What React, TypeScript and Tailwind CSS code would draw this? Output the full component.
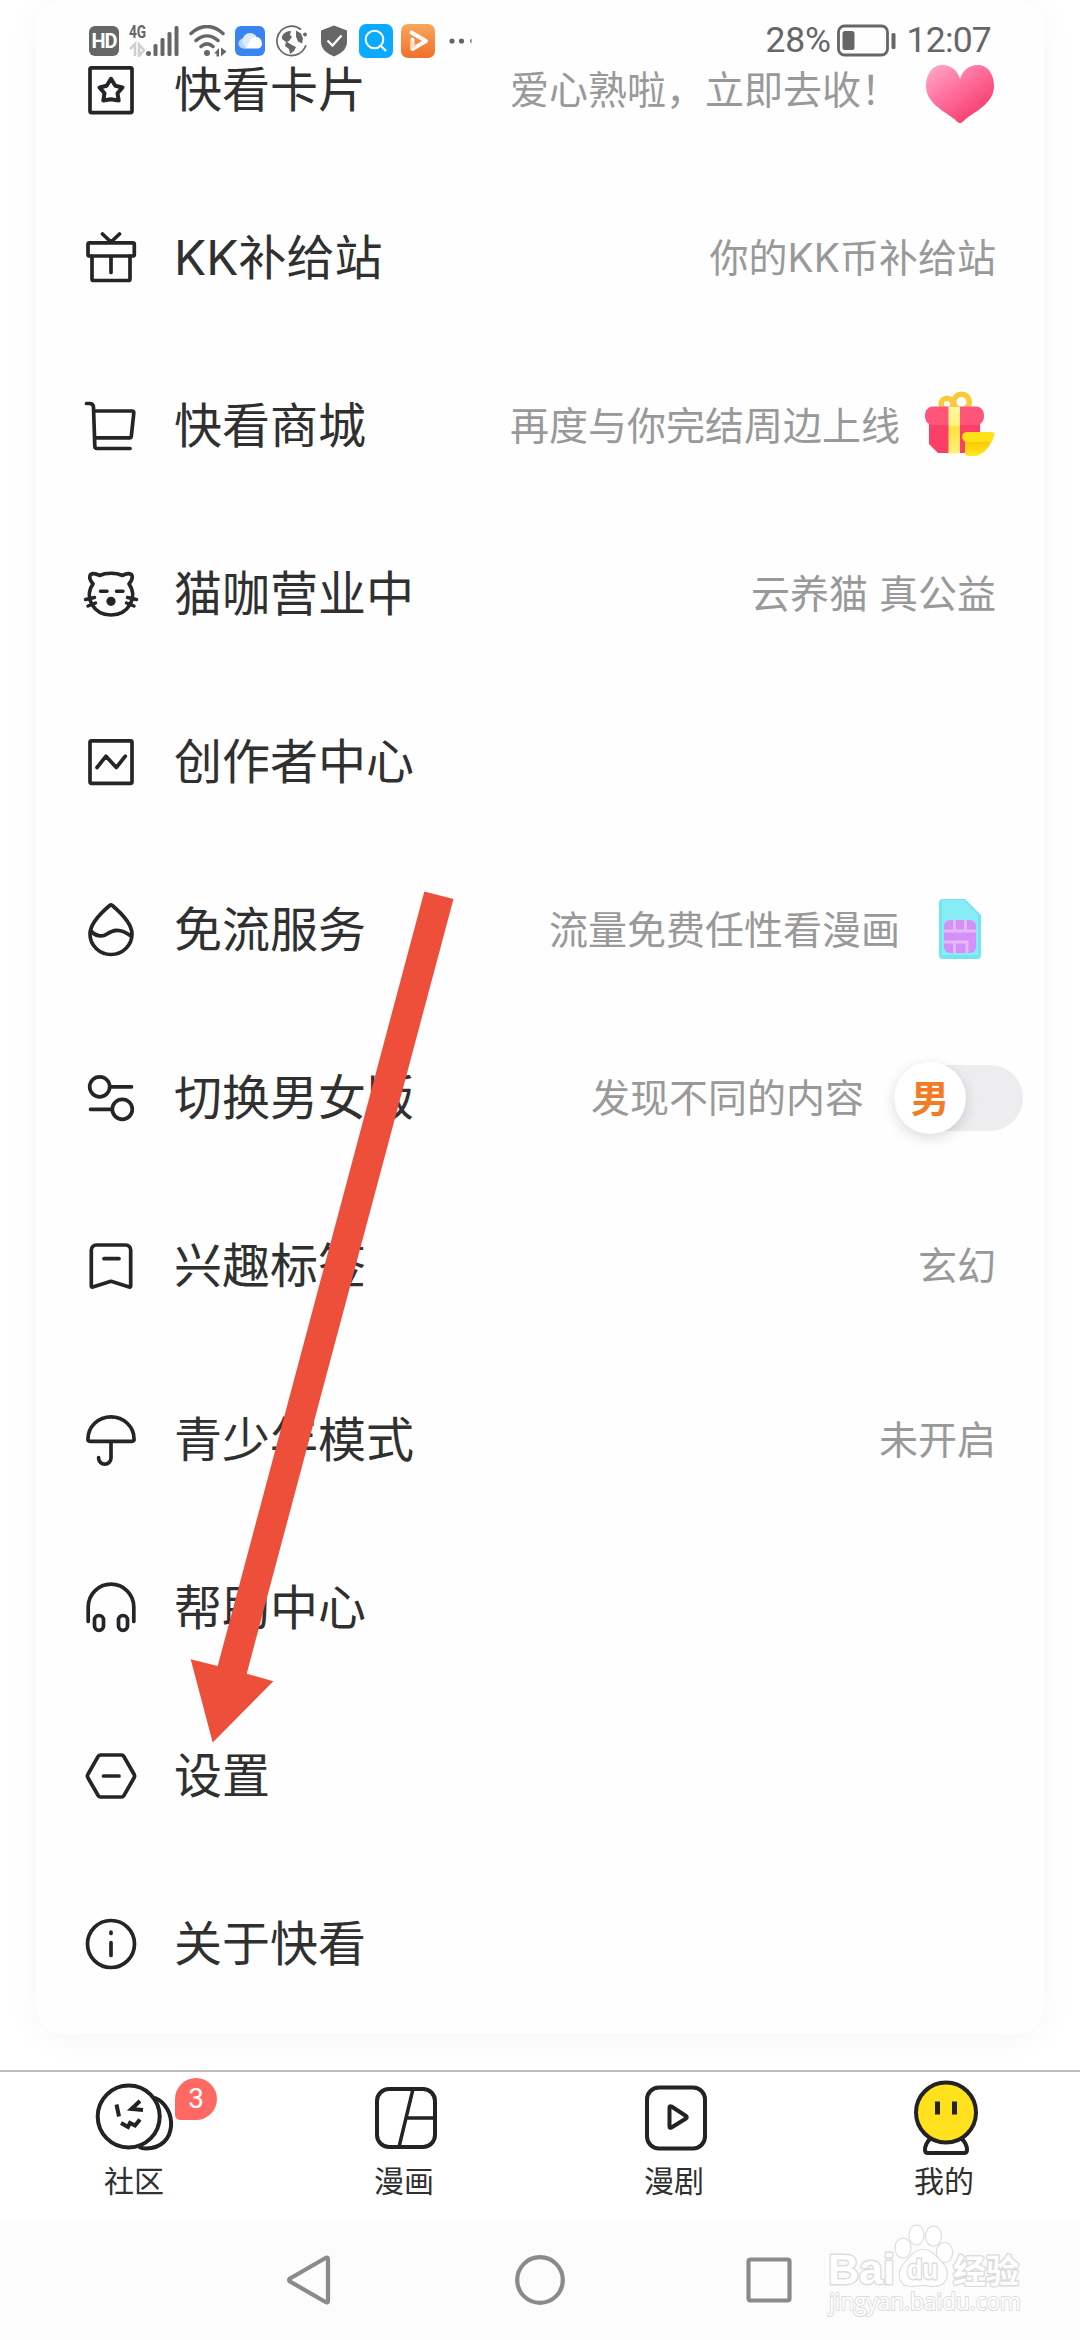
import { memo, type ReactNode } from 'react';

interface MenuItem {
    label: string;
    icon: ReactNode;
    hint?: string;
    extra?: ReactNode;
}

/**
 * Line icon frame shared by every menu row
 */
const LineIcon = ({ children }: { children: ReactNode }) => (
    <svg
        viewBox="0 0 60 60"
        className="size-[60px] shrink-0"
        fill="none"
        stroke="#272429"
        strokeWidth="3.7"
        strokeLinecap="round"
        strokeLinejoin="round"
    >
        {children}
    </svg>
);

const HeartIcon = () => (
    <svg viewBox="0 0 72 72" className="size-[72px]">
        <defs>
            <linearGradient id="heart" x1="0.1" y1="0.1" x2="0.75" y2="0.85">
                <stop offset="0" stopColor="#ff9dc0" />
                <stop offset="0.5" stopColor="#ff6c9a" />
                <stop offset="1" stopColor="#f5416f" />
            </linearGradient>
        </defs>
        <path
            d="M36 69c-2 0-3.500-2-5-3.500C20 57 2 49 2 32 2 19 9 11 18 11c9 0 15 5 18 14 3-9 9-14 18-14 9 0 16 8 16 21 0 17-18 25-29 33.500C39.500 67 38 69 36 69z"
            fill="url(#heart)"
        />
    </svg>
);

const GiftBoxIcon = () => (
    <svg viewBox="0 0 72 72" className="size-[72px]">
        <defs>
            <linearGradient id="ribbon" x1="0" y1="0" x2="0" y2="1">
                <stop offset="0" stopColor="#fff79a" />
                <stop offset="0.38" stopColor="#fff383" />
                <stop offset="0.45" stopColor="#ffdf3e" />
                <stop offset="1" stopColor="#fff27c" />
            </linearGradient>
            <linearGradient id="bowl" x1="0" y1="0" x2="0" y2="1">
                <stop offset="0" stopColor="#fbc400" />
                <stop offset="1" stopColor="#ffea20" />
            </linearGradient>
        </defs>
        <g fill="none" stroke="#f8c93a" strokeWidth="5.500">
            <circle cx="23" cy="14" r="5.800" />
            <circle cx="37.500" cy="12" r="7.800" />
        </g>
        <path d="M5 30h51v33H14l-9-9z" fill="#fb3f66" />
        <path d="M9 16.500h43c5 0 8 4 8 9 0 6-3 9.500-8 9.500H9c-5 0-8-3.500-8-9.500 0-5 3-9 8-9z" fill="#ff5579" />
        <path d="M24.500 16.500h11.500v47H24.500z" fill="url(#ribbon)" />
        <path d="M41 50h27c-3 8-10 16-18 16h-5c-3 0-4-1-4-4z" fill="url(#bowl)" />
        <path d="M43 42h24c3 0 4 1 3 4l-2 6H43c-6 0-7-10 0-10z" fill="#ffe118" />
    </svg>
);

const SimIcon = () => (
    <svg viewBox="0 0 72 72" className="size-[72px]">
        <path d="M19 5h22l16 16v40a4 4 0 0 1-4 4H19a4 4 0 0 1-4-4V9a4 4 0 0 1 4-4z" fill="#74e4f0" />
        <path d="M18 6h22l14 15v40H18z" fill="#86ecf6" />
        <rect x="20" y="26" width="32" height="33" rx="6" fill="#d48ff8" />
        <path d="M20 37h32M30.500 26v11M41.500 26v11M20 48h23v11M30.500 48v11" fill="none" stroke="#e4b9fb" strokeWidth="3" />
    </svg>
);

const VersionSwitch = () => (
    <div className="-mr-[27px] ml-1.5 flex h-[66px] w-[129px] items-center rounded-full bg-[#ededef]">
        <div className="flex size-[72px] shrink-0 items-center justify-center rounded-full bg-white text-[38px] leading-none font-bold text-[#f37b26] shadow-[0_4px_14px_rgba(0,0,0,0.14)]">
            男
        </div>
    </div>
);

const mainItems: MenuItem[] = [
    {
        label: '快看卡片',
        hint: '爱心熟啦，立即去收！',
        extra: <HeartIcon />,
        icon: (
            <>
                <rect x="9" y="7.800" width="42" height="44.800" rx="1.500" />
                <path d="M30 18.800l4.300 7 7.200 1.700-5 5.700 1.200 7.300-7.700-1.300-7.700 1.300 1.200-7.300-5-5.700 7.200-1.700z" strokeWidth="4" />
            </>
        ),
    },
    {
        label: 'KK补给站',
        hint: '你的KK币补给站',
        icon: (
            <>
                <rect x="7" y="14.800" width="46.300" height="13.200" rx="1.500" />
                <path d="M11 28v23a1.500 1.500 0 0 0 1.500 1.500h35A1.500 1.500 0 0 0 49 51V28M30 29v15.500M21.500 6l8.500 8 8.500-8" />
            </>
        ),
    },
    {
        label: '快看商城',
        hint: '再度与你完结周边上线',
        extra: <GiftBoxIcon />,
        icon: (
            <path d="M5.500 7.500h3c2.500 0 4 1.500 4 4L13.800 50c0 1.500 1 2.500 2.500 2.500H49M13.500 15h37.500q2 0 1.800 2L50.300 40.500q-.2 1.300-1.800 1.300H14" />
        ),
    },
    {
        label: '猫咖营业中',
        hint: '云养猫 真公益',
        icon: (
            <>
                <path d="M12 20C8 15 8.500 12 9.500 10.500c2.500-1.500 6.500-.5 9 1C25 8.500 35 8.500 41.500 11.500c2.500-1.500 6.500-2.500 9-1 1 1.500 1.500 4.500-2.500 9.500 9.500 13-.5 31-18 31S2.500 33 12 20" />
                <path d="M19.500 27.300h6.500M35.500 27.300h6.500M4.500 35.500l9-2M7 42l7.500-3M55.500 35.500l-9-2M53 42l-7.500-3" strokeWidth="3.500" />
                <circle cx="30" cy="37.300" r="4.600" fill="#272429" stroke="none" />
            </>
        ),
    },
    {
        label: '创作者中心',
        icon: (
            <>
                <rect x="9" y="8.800" width="42" height="42.500" rx="1.500" />
                <path d="M16 35.500l9-11.300 10.300 11.300 9-11.300" />
            </>
        ),
    },
    {
        label: '免流服务',
        hint: '流量免费任性看漫画',
        extra: <SimIcon />,
        icon: (
            <>
                <path d="M28.700 5.500q1.300-1 2.600 0C39 12 51 24 51 34a21 20.500 0 0 1-42 0c0-10 12-22 19.700-28.500z" />
                <path d="M10 31c4 5 11 6.500 16 3s12-7 24 2" />
            </>
        ),
    },
    {
        label: '切换男女版',
        hint: '发现不同的内容',
        extra: <VersionSwitch />,
        icon: (
            <>
                <circle cx="18.700" cy="18.800" r="10" />
                <circle cx="41.300" cy="41.300" r="10" />
                <path d="M30 18.800h20.500M9.500 41.300H30" />
            </>
        ),
    },
    {
        label: '兴趣标签',
        hint: '玄幻',
        icon: (
            <>
                <path d="M10.300 50V14a5 5 0 0 1 5-5h29.400a5 5 0 0 1 5 5v36q0 1.500-1.500 1L30 45.300 11.800 51q-1.500.5-1.500-1z" />
                <path d="M23 22.700h15" />
            </>
        ),
    },
];

const systemItems: MenuItem[] = [
    {
        label: '青少年模式',
        hint: '未开启',
        icon: (
            <path d="M9 31.300h42q2.500 0 2-2.500a23 22 0 0 0-46 0q-.5 2.500 2 2.500zM30 31.500V48a6.200 6.200 0 0 1-12.400 0v-.5" />
        ),
    },
    {
        label: '帮助中心',
        icon: (
            <>
                <path d="M7.200 43.500V29a22.800 22.800 0 0 1 45.600 0v14.500" />
                <rect x="13.500" y="37.500" width="9" height="14.800" rx="4.500" />
                <rect x="37.500" y="37.500" width="9" height="14.800" rx="4.500" />
            </>
        ),
    },
    {
        label: '设置',
        icon: (
            <>
                <path d="M19.500 9h21q1.500 0 2.200 1.200l10.500 18.300q.8 1.500 0 3L42.700 49.800Q42 51 40.500 51h-21q-1.500 0-2.200-1.200L6.800 31.500q-.8-1.500 0-3l10.500-18.300Q18 9 19.500 9z" />
                <path d="M22.500 30h15.500" />
            </>
        ),
    },
    {
        label: '关于快看',
        icon: (
            <>
                <circle cx="30" cy="30" r="23.500" />
                <path d="M30 18v1.500M30 28.500V41.500" />
            </>
        ),
    },
];

const MenuRow = memo(function MenuRow({ label, icon, hint, extra }: MenuItem) {
    return (
        <li className="flex h-[168px] items-center pr-12 pl-[45px]">
            <LineIcon>{icon}</LineIcon>
            <span className="ml-[33px] text-[48px] leading-[60px] text-[#303030]">{label}</span>
            <div className="ml-auto flex items-center gap-6 text-[39px] leading-[48px] text-[#999]">
                {hint && <span>{hint}</span>}
                {extra}
            </div>
        </li>
    );
});

const StatusBar = () => (
    <header className="absolute inset-x-0 top-0 flex h-[82px] items-center pr-[89px] pl-[89px] text-[#666]">
        <span className="flex size-[30px] items-center justify-center rounded-md bg-[#666] font-[Roboto] text-[20px] leading-none font-bold tracking-[-1px] text-white">
            HD
        </span>
        <div className="relative ml-2.5 h-8 w-[50px]">
            <span className="absolute -top-0.5 left-0 origin-left scale-x-[0.74] font-[Roboto] text-[18.5px] leading-[18px] font-bold">4G</span>
            <svg viewBox="0 0 50 32" className="size-full" fill="#666">
                <path d="M1 24l5-5v12M10 31V19.500l5 5.500z" fill="none" stroke="#cfcfcf" strokeWidth="2.500" />
                <circle cx="19.500" cy="28.500" r="2.500" />
                <rect x="24.500" y="19" width="4" height="12" rx="1.500" />
                <rect x="31.500" y="13" width="4" height="18" rx="1.500" />
                <rect x="38.500" y="7" width="4" height="24" rx="1.500" />
                <rect x="45.500" y="1" width="4" height="30" rx="1.500" />
            </svg>
        </div>
        <svg viewBox="0 0 38 32" className="ml-2.5 h-8 w-[38px]" fill="none" stroke="#666" strokeWidth="3.500" strokeLinecap="round">
            <path d="M2 8.500C12-.8 24-.8 34 8.500M7 15.500c7-6 15-6 22 0M12 21.500c4-3.500 8-3.500 12 0" />
            <circle cx="18" cy="28" r="3" fill="#666" stroke="none" />
            <path d="M25 28.500l5-5.500v8.500h-2.500v-3zM32 22.500v9l5.500-5z" fill="#666" stroke="none" />
        </svg>
        <svg viewBox="0 0 30 30" className="ml-2 size-[30px]">
            <rect width="30" height="30" rx="6" fill="#3a83f3" />
            <circle cx="8.500" cy="17.500" r="5" fill="#b8d7ff" />
            <circle cx="15" cy="14.500" r="7.500" fill="#dcebff" />
            <path d="M8 22.500c6 0 5-9.500 11-11.500 5-1 8 3 8 6.500s-2 5-5 5z" fill="#fff" />
        </svg>
        <svg viewBox="0 0 32 32" className="ml-[11px] size-8" fill="none" stroke="#666">
            <path d="M25 4.500A14.700 14.700 0 1 0 19 30.200q8-2 11-10" strokeWidth="1.700" />
            <circle cx="29" cy="9.500" r="1.900" fill="#666" stroke="none" />
            <path d="M6 11q3-5 9-5l-1 4 2 2-3 4-2 1 5 3 4 2-2 4-4 3-1-5-4-3 1-4-4-3z" fill="#666" stroke="none" />
            <path d="M20 5.500l5 3 2 5-1 5-4-2-2-5z" fill="#666" stroke="none" />
        </svg>
        <svg viewBox="0 0 26 32" className="ml-[13px] h-8 w-[26px]">
            <path d="M13 .5L26 5.500v11c0 8-6 12-13 15C6 28.500 0 24.500 0 16.500v-11z" fill="#666" />
            <path d="M6.500 15.500l5 5 9-10" fill="none" stroke="#fff" strokeWidth="2.300" />
        </svg>
        <svg viewBox="0 0 34 34" className="ml-3 size-[34px]">
            <rect width="34" height="34" rx="7" fill="#0aaaff" />
            <circle cx="15.500" cy="15.500" r="8.800" fill="none" stroke="#fff" strokeWidth="2" />
            <path d="M21 21l6 6" stroke="#fff" strokeWidth="2.200" />
        </svg>
        <svg viewBox="0 0 34 34" className="ml-2 size-[34px]">
            <defs>
                <linearGradient id="player" x1="0" y1="0" x2="0" y2="1">
                    <stop offset="0" stopColor="#f9a65f" />
                    <stop offset="1" stopColor="#f0702a" />
                </linearGradient>
            </defs>
            <rect width="34" height="34" rx="7" fill="url(#player)" />
            <path d="M10.500 8.500L25 17l-13.500 8v-9.500" fill="none" stroke="#fff" strokeWidth="3.800" strokeLinejoin="round" strokeLinecap="round" />
            <path d="M9.500 15v11l6-4z" fill="#ffd9bd" />
        </svg>
        <svg viewBox="0 0 24 8" className="ml-3.5 h-2 w-6" fill="#666">
            <circle cx="3" cy="4" r="2.600" />
            <circle cx="12.500" cy="4" r="2.600" />
            <path d="M22.500 1.500v5q-3-2.500 0-5z" />
        </svg>
        <div className="ml-auto flex items-center font-[Roboto] text-[35.5px] leading-none tracking-[-0.8px]">
            <span className="tracking-[-0.3px]">28%</span>
            <svg viewBox="0 0 60 34" className="ml-1.5 h-[34px] w-[60px]">
                <rect x="1.500" y="2" width="49" height="29" rx="6" fill="none" stroke="#666" strokeWidth="2.800" />
                <rect x="5.500" y="7" width="12" height="19" rx="2.500" fill="#666" />
                <rect x="54.500" y="9" width="4" height="16" rx="1.500" fill="#666" />
            </svg>
            <span className="ml-2.5">12:07</span>
        </div>
    </header>
);

const CommunityIcon = () => (
    <svg viewBox="0 0 80 80" className="size-20" fill="none" stroke="#232323" strokeWidth="4">
        <path d="M59 18.500c24 9 24 51-8 51q-4 0-7-1.500" />
        <circle cx="33.700" cy="37.500" r="31" fill="#fff" />
        <path d="M21.500 25.500l2.500 12M45 22l-8.500 8 11.500 1M26 44l7 4 2-4 5 2.500 5-6" strokeWidth="4" />
    </svg>
);

const ComicIcon = () => (
    <svg viewBox="0 0 80 80" className="size-20" fill="none" stroke="#232323" strokeWidth="4">
        <rect x="12" y="10" width="58" height="58" rx="12" />
        <path d="M48 10L34 68M42 39h28" strokeWidth="3.500" />
    </svg>
);

const DramaIcon = () => (
    <svg viewBox="0 0 80 80" className="size-20" fill="none" stroke="#232323" strokeWidth="4">
        <rect x="12" y="8.500" width="58" height="61" rx="12" />
        <path d="M34.500 28.500v19q0 2 2 1L51 39.500q1.500-1.200 0-2.500l-14.500-9.500q-2-1-2 1z" strokeLinejoin="round" />
    </svg>
);

const MineIcon = () => (
    <svg viewBox="0 0 80 80" className="size-20" fill="none" stroke="#232323" strokeWidth="4">
        <path d="M25 60q-5 5-5 11 0 3 3 3h36q3 0 3-3 0-6-5-11" fill="#fff" />
        <circle cx="41" cy="33.500" r="30" fill="#ffe11e" />
        <path d="M32.500 22.500v13M49.500 22.500v13" strokeWidth="5" />
    </svg>
);

const tabs = [
    { label: '社区', icon: <CommunityIcon />, badge: 3 },
    { label: '漫画', icon: <ComicIcon /> },
    { label: '漫剧', icon: <DramaIcon /> },
    { label: '我的', icon: <MineIcon /> },
];

const TabBar = () => (
    <nav className="grid h-[150px] grid-cols-4 border-t-2 border-[#bdbdbd] bg-white">
        {tabs.map(({ label, icon, badge }) => (
            <div key={label} className="relative flex flex-col items-center pt-[7px]">
                {icon}
                <span className="mt-0.5 -ml-0.5 text-[30px] leading-10 text-[#303030]">{label}</span>
                {badge && (
                    <span className="absolute top-1.5 left-[175px] flex size-[42px] items-center justify-center rounded-[21px] rounded-bl-[5px] bg-[#fe6a63] font-[Roboto] text-[28px] leading-none text-white">
                        {badge}
                    </span>
                )}
            </div>
        ))}
    </nav>
);

const NavigationBar = () => (
    <footer className="flex h-[120px] items-center justify-center gap-[170px] bg-[#fcfcfc]">
        <svg viewBox="0 0 60 60" className="size-[60px]" fill="none" stroke="#8a8a8a" strokeWidth="4.200" strokeLinejoin="round">
            <path d="M48 9.500v41q0 3-2.500 1.500L10 31.500q-2-1.500 0-3L45.500 8Q48 6.500 48 9.500z" />
        </svg>
        <svg viewBox="0 0 60 60" className="size-[60px]" fill="none" stroke="#8a8a8a" strokeWidth="4.200">
            <circle cx="30" cy="30" r="22.800" />
        </svg>
        <svg viewBox="0 0 60 60" className="size-[60px]" fill="none" stroke="#8a8a8a" strokeWidth="4.200">
            <rect x="8.500" y="9.500" width="41" height="41" rx="2" />
        </svg>
    </footer>
);

const Watermark = () => (
    <div className="absolute top-[2222px] left-[827px] h-[100px] w-[200px]">
        <svg viewBox="0 0 200 100" className="size-full [paint-order:stroke]" fill="#fff" stroke="#dcdcdc" strokeWidth="2.800" strokeLinejoin="round">
            <text x="1" y="62" fontSize="43" fontWeight="700" fontFamily="Liberation Sans, sans-serif" textLength="67" lengthAdjust="spacingAndGlyphs">
                Bai
            </text>
            <g strokeWidth="2.200">
                <ellipse cx="76" cy="26" rx="7.500" ry="9.500" />
                <ellipse cx="89.500" cy="13" rx="7" ry="9.500" />
                <ellipse cx="106.500" cy="14" rx="7.500" ry="9.500" />
                <ellipse cx="117.500" cy="30.500" rx="7.500" ry="9.500" />
                <path d="M96 28c9 0 14 8 19 13 8 8 6 23-8 23-5 0-7-1-11-1s-8 1-12 1c-13 0-14-15-6-23 5-5 9-13 18-13z" />
            </g>
            <text x="80" y="57" fontSize="27" fontWeight="700" fontFamily="Liberation Sans, sans-serif" textLength="31" lengthAdjust="spacingAndGlyphs">
                du
            </text>
            <text x="126" y="61" fontSize="33" fontWeight="700" fontFamily="Noto Sans CJK SC, sans-serif">
                经验
            </text>
            <text x="2" y="88" fontSize="23" fontWeight="400" strokeWidth="2" fontFamily="Open Sans, sans-serif" textLength="192" lengthAdjust="spacingAndGlyphs">
                jingyan.baidu.com
            </text>
        </svg>
    </div>
);

/**
 * Red arrow pointing at the settings row
 */
const PointerArrow = () => (
    <svg viewBox="0 0 264 852" className="pointer-events-none absolute top-[891px] left-[190px] h-[852px] w-[264px]">
        <path d="M234.300.500L263.500 8 56.700 782.700l26.600 7.600L22.700 851.500.7 768.300l27 6.700z" fill="#ed4f3a" />
    </svg>
);

export default function App() {
    return (
        <div
            lang="zh-CN"
            className="relative flex h-[2340px] w-[1080px] flex-col overflow-hidden bg-white font-[Inter,'Noto_Sans_CJK_SC',sans-serif]"
        >
            <main className="h-[2070px] overflow-hidden px-9">
                <div className="h-[2034px] rounded-[28px] bg-[#fefefe] py-1.5 shadow-[0_4px_36px_rgba(0,0,0,0.045)]">
                    <ul>
                        {mainItems.map((item) => (
                            <MenuRow key={item.label} {...item} />
                        ))}
                    </ul>
                    <ul className="mt-1.5">
                        {systemItems.map((item) => (
                            <MenuRow key={item.label} {...item} />
                        ))}
                    </ul>
                </div>
            </main>
            <TabBar />
            <NavigationBar />
            <StatusBar />
            <PointerArrow />
            <Watermark />
        </div>
    );
}
